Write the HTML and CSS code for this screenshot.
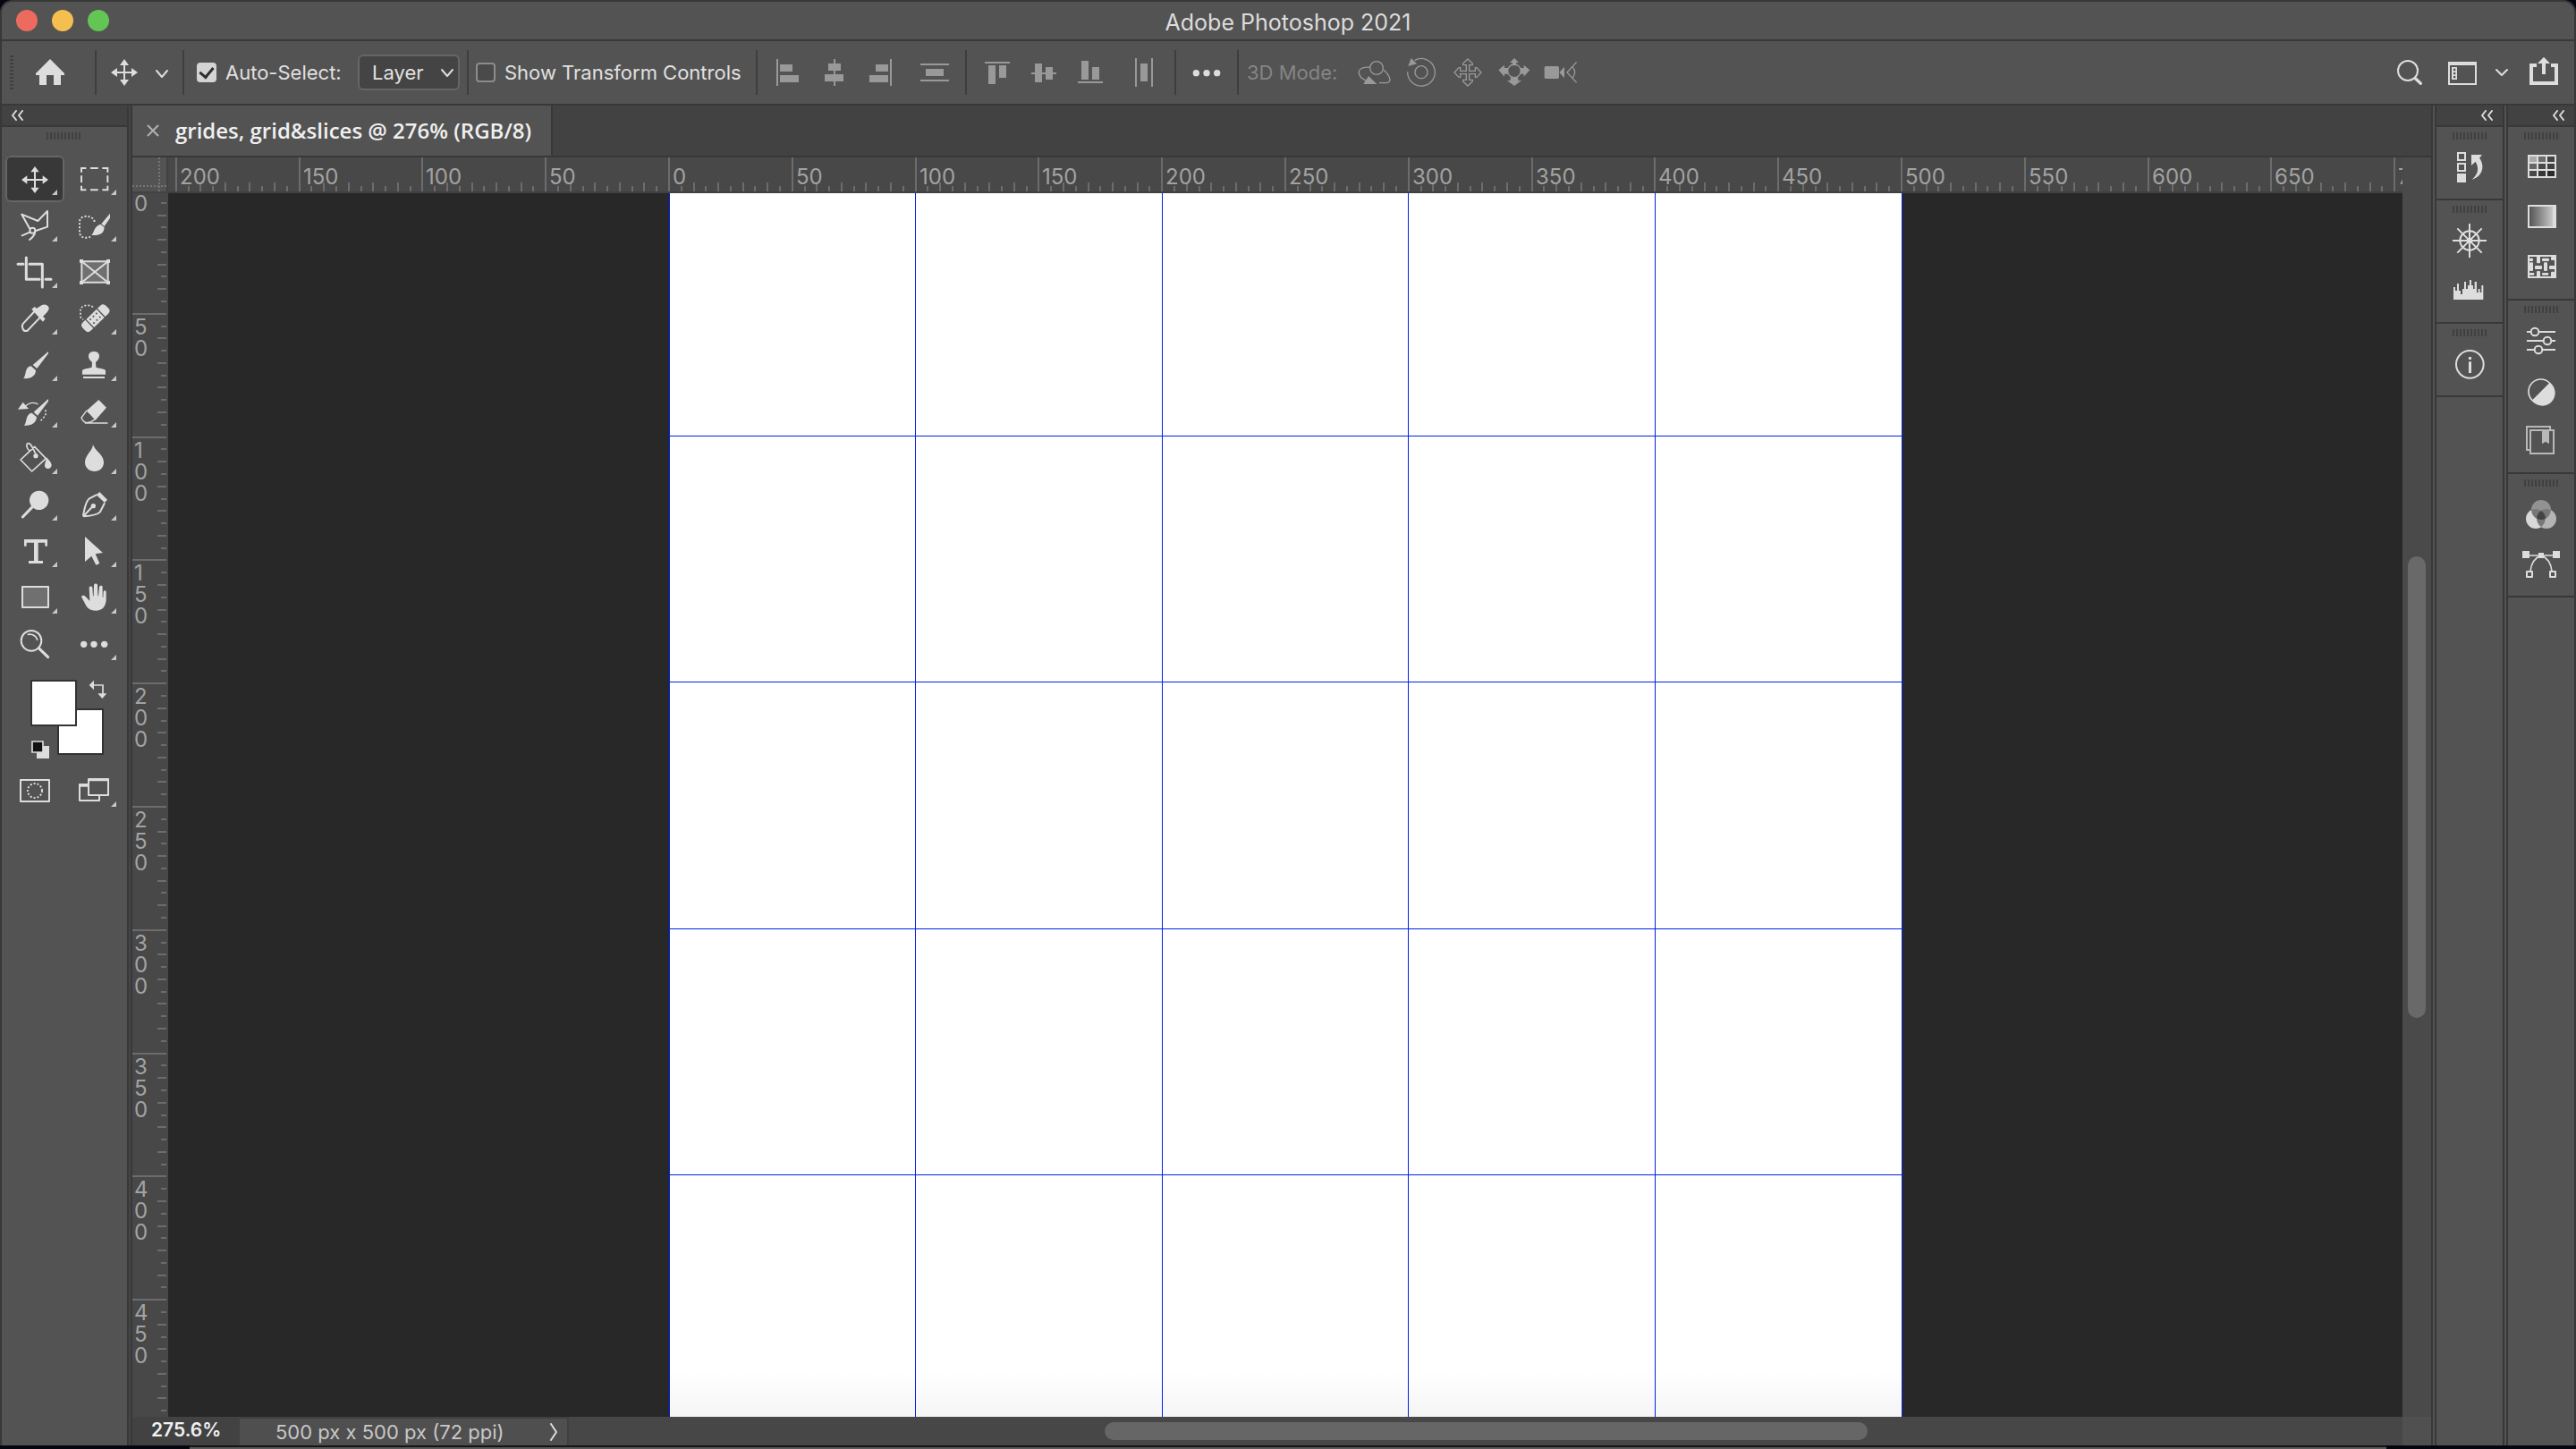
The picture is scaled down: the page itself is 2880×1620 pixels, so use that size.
FILE: index.html
```html
<!DOCTYPE html>
<html lang="en">
<head>
<meta charset="utf-8">
<title>Adobe Photoshop 2021</title>
<link rel="stylesheet" href="styles.css">
</head>
<body>
<div class="window">
  <header class="titlebar">
    <div class="lights">
      <button class="light red" aria-label="Close"></button>
      <button class="light yellow" aria-label="Minimize"></button>
      <button class="light green" aria-label="Zoom"></button>
    </div>
    <h1 class="app-title">Adobe Photoshop 2021</h1>
  </header>

  <div class="options">
    <span class="drag"></span>
    <button class="opt" aria-label="Home"><svg width="84" height="54" viewBox="22 54 84 54"><path class="f" d="M56 66 72 82v2h-4v11h-8V84h-8v11h-8V84h-4v-2z"/></svg></button>
    <span class="sep"></span>
    <button class="opt" aria-label="Move tool presets"><svg width="96" height="54" viewBox="108 54 96 54"><path class="s2" d="M139 70v22M128 81h22"/><path class="f" d="m139 66 5 7h-10zM139 96l5-7h-10zM124 81l7-5v10zM154 81l-7-5v10z"/><path class="s2" d="m175 79 6 7 6-7"/></svg></button>
    <span class="sep"></span>
    <label class="check auto"><input type="checkbox" checked>Auto-Select:</label>
    <span class="picker">
      <select aria-label="Auto-select target"><option>Layer</option><option>Group</option></select>
      <svg class="picker-arrow" width="16" height="12" viewBox="0 0 16 12"><path class="s2" d="m2 2 6 7 6-7"/></svg>
    </span>
    <span class="sep"></span>
    <label class="check transform"><input type="checkbox">Show Transform Controls</label>
    <span class="sep"></span>
    <button class="opt dim" aria-label="Align left edges"><svg width="60" height="54" viewBox="-39 0 180 162"><path d="M24 36h6v90h-6zM36 54h42v24H36zM36 90h63v24H36z"/></svg></button>
    <button class="opt dim" aria-label="Align horizontal centers"><svg width="52" height="54" viewBox="141 0 156 162"><path d="M216 36h6v90h-6zM198 51h42v24h-42zM186 87h63v24h-63z"/></svg></button>
    <button class="opt dim" aria-label="Align right edges"><svg width="54" height="54" viewBox="297 0 162 162"><path d="M405 36h6v90h-6zM357 54h42v24h-42zM336 90h63v24h-63z"/></svg></button>
    <button class="opt dim" aria-label="Distribute vertically"><svg width="66" height="54" viewBox="459 0 198 162"><path d="M507 51h96v6h-96zM525 69h60v24h-60zM507 105h96v6h-96z"/></svg></button>
    <span class="sep"></span>
    <button class="opt dim" aria-label="Align top edges"><svg width="60" height="54" viewBox="663 0 180 162"><path d="M723 45h84v6h-84zM735 57h24v63h-24zM771 57h24v42h-24z"/></svg></button>
    <button class="opt dim" aria-label="Align vertical centers"><svg width="52" height="54" viewBox="843 0 156 162"><path d="M879 81h84v6h-84zM891 51h24v63h-24zM927 63h24v42h-24z"/></svg></button>
    <button class="opt dim" aria-label="Align bottom edges"><svg width="56" height="54" viewBox="999 0 168 162"><path d="M1035 111h84v6h-84zM1047 42h24v63h-24zM1083 63h24v42h-24z"/></svg></button>
    <button class="opt dim" aria-label="Distribute horizontally"><svg width="64" height="54" viewBox="1167 0 192 162"><path d="M1227 33h6v96h-6zM1245 51h24v60h-24zM1281 33h6v96h-6z"/></svg></button>
    <span class="sep"></span>
    <button class="opt" aria-label="More options"><svg width="68" height="54" viewBox="-45 0 204 162"><g class="f"><circle cx="22" cy="83" r="11"/><circle cx="57" cy="83" r="11"/><circle cx="92" cy="83" r="11"/></g></svg></button>
    <span class="sep"></span>
    <span class="mode">3D Mode:</span>
    <button class="opt dim" aria-label="Orbit"><svg width="60" height="54" viewBox="525 0 180 162"><g class="l"><circle cx="627" cy="66" r="22"/><path d="M605 64c-30-3-48 10-30 34l18 12M650 72c24 20 30 44 8 44h-22"/></g><path d="M583 120l17-27 28 27z"/></svg></button>
    <button class="opt dim" aria-label="Roll"><svg width="50" height="54" viewBox="705 0 150 162"><g class="l"><circle cx="777" cy="80" r="21"/><path d="M731 79a46 46 0 1 0 24-39"/></g><path d="m733 60 10-27 19 19z"/></svg></button>
    <button class="opt dim" aria-label="Pan"><svg width="52" height="54" viewBox="855 0 156 162"><path class="l" d="m933 36 16 15v5h-11v20h20V65h5l15 16-15 16h-5V86h-20v20h11v5l-16 15-16-15v-5h11V86h-20v11h-5l-15-16 15-16h5v11h20V56h-11v-5z"/></svg></button>
    <button class="opt dim" aria-label="Slide"><svg width="50" height="54" viewBox="1011 0 150 162"><circle class="l" cx="1089" cy="76" r="22"/><path d="m1089 33 15 15h-9v10h-12V48h-9zM1089 126l24-18h-11v-11h-26v11h-11zM1036 73l20-17v10h12v20h-12v9zM1141 73l-20-17v10h-12v20h12v9z"/></svg></button>
    <button class="opt dim" aria-label="Zoom 3D camera"><svg width="56" height="54" viewBox="1161 0 168 162"><rect x="1190" y="60" width="49" height="42" rx="5"/><path d="m1240 81 17-19v38z"/><path class="l" d="m1298 46-32 35 32 34M1284 62q16 18 0 38"/></svg></button>
    <span class="grow"></span>
    <button class="opt" aria-label="Search"><svg width="60" height="54" viewBox="72 162 180 162"><circle class="s6" cx="156" cy="237" r="33"/><path class="s6 thick" d="m182 264 17 16"/></svg></button>
    <button class="opt" aria-label="Choose a workspace"><svg width="92" height="54" viewBox="252 162 276 162"><path class="f" fill-rule="evenodd" d="M291 207h96v78h-96zm6 12v60h84v-60zM303 225h18v42h-18zm6 5v8h7v-8zm0 13v7h7v-7zm0 12v7h7v-7z"/><path class="s6" d="m453 234 18 18 18-18"/></svg></button>
    <button class="opt" aria-label="Share"><svg width="62" height="54" viewBox="528 162 186 162"><path class="f" d="M564 213h24v12h-12v48h72v-48h-12v-12h24v72h-96zM612 191l21 22h-15v36h-12v-36h-15z"/></svg></button>
  </div>

  <div class="workspace">
    <aside class="tools">
      <div class="dock-head left"><button class="fold" aria-label="Collapse tools"><svg width="14" height="12" viewBox="0 0 14 12"><path class="s2" d="M6 1 2 6l4 5M13 1 9 6l4 5"/></svg></button></div>
      <div class="grip"></div>
      <div class="tool-grid">
        <button class="tool on" aria-label="Move"><svg viewBox="18 192 198 156"><path class="s6" d="M117 240v66M84 273h66"/><path class="f" d="m117 228 14 19h-28zM117 318l14-19h-28zM72 273l19-14v28zM162 273l-19-14v28z"/><path class="c" d="M192 306v18h-18z"/></svg></button>
        <button class="tool" aria-label="Marquee"><svg viewBox="216 192 198 156"><path class="s6 butt" d="M273 248v-14h16M303 234h26M343 234h18v14M361 259v23M361 293v14h-18M329 307h-26M289 307h-16v-14M273 282v-23"/><path class="c" d="M390 306v18h-18z"/></svg></button>
        <button class="tool" aria-label="Lasso"><svg viewBox="18 348 198 156"><path class="s6" d="M99 436 73 389l54 22 32-33v53l-39 13M100 449l-26 11M117 452q-5 14-18 22"/><circle class="s6" cx="109" cy="443" r="9"/><path class="c" d="M192 462v18h-18z"/></svg></button>
        <button class="tool" aria-label="Quick selection"><svg viewBox="216 348 198 156"><path class="s6 dots" d="M317 414c-4-24-50-26-50 0v34c0 22 26 22 36 16"/><path class="f" d="M369 386v15l-19 28-10-8zM337 422l13 11c-2 20-14 28-44 26 10-5 8-31 31-37z"/><path class="c" d="M390 462v18h-18z"/></svg></button>
        <button class="tool" aria-label="Crop"><svg viewBox="18 504 198 156"><path class="s9" d="M60 556h18M88 534v73h44M153 607h18M99 556h43v77"/><path class="c" d="M192 618v18h-18z"/></svg></button>
        <button class="tool" aria-label="Frame"><svg viewBox="216 504 198 156"><path class="s6 tint" d="M274 547h88v70h-88z"/><path class="s6" d="m274 547 88 70M362 547l-88 70"/><path class="f" d="M267 540h12v12h-12zM357 540h12v12h-12zM267 612h12v12h-12zM357 612h12v12h-12z"/></svg></button>
        <button class="tool" aria-label="Eyedropper"><svg viewBox="18 660 198 156"><path class="s6" d="m116 714-38 41c-7 8-2 25 8 25h5l42-44"/><path class="f" d="m106 707 10-8 7 5 18-11c8-4 22 0 23 10 1 5-3 10-6 14l-14 15 8 7-8 10z"/><path class="c" d="M192 774v18h-18z"/></svg></button>
        <button class="tool" aria-label="Healing brush"><svg viewBox="216 660 198 156"><path class="s5 dots" d="M312 700c-16-12-43-5-42 12v20q2 8 10 10"/><g transform="rotate(-44 319 737)"><path class="f" d="M279 719q-13 0-13 13v12q0 13 13 13h12v-38zM295 719h48v38h-48zM347 719v38h14q13 0 13-13v-12q0-13-13-13z"/><g class="hole"><circle cx="305" cy="729" r="3"/><circle cx="319" cy="729" r="3"/><circle cx="333" cy="729" r="3"/><circle cx="305" cy="746" r="3"/><circle cx="319" cy="746" r="3"/><circle cx="333" cy="746" r="3"/></g></g><path class="c" d="M390 774v18h-18z"/></svg></button>
        <button class="tool" aria-label="Brush"><svg viewBox="18 816 198 156"><path class="f" d="M162 849v7l-38 50-14-12zM104 898l16 14c0 18-16 30-42 27 11-5 3-38 26-41z"/><path class="c" d="M192 930v18h-18z"/></svg></button>
        <button class="tool" aria-label="Clone stamp"><svg viewBox="216 816 198 156"><path class="f" d="M309 885c-17-12-17-36 6-36s23 24 6 36l1 16c2 6 32 4 32 13v12h-78v-12c0-9 29-7 32-13zM279 933h72v6h-72z"/><path class="c" d="M390 930v18h-18z"/></svg></button>
        <button class="tool" aria-label="History brush"><svg viewBox="18 972 198 156"><path class="f" d="M162 1008v8l-36 48-13-12zM107 1055l16 14c-1 18-17 31-43 28 11-5 4-39 27-42zM60 1043l17-24 19 22z"/><path class="s4" d="M84 1034q18-20 42-9"/><path class="s5 dots" d="M153 1045v18l-20 22"/><path class="c" d="M192 1086v18h-18z"/></svg></button>
        <button class="tool" aria-label="Eraser"><svg viewBox="216 972 198 156"><path class="f" d="m290 1048 41-37 26 26-37 42z"/><path class="s4" d="m290 1048-17 23q3 11 16 17l16-3 15-10M286 1089h74"/><path class="c" d="M390 1086v18h-18z"/></svg></button>
        <button class="tool" aria-label="Paint bucket"><svg viewBox="18 18 198 156"><path class="s5" d="m69 102 47-44 38 40-47 43zM100 73c-12-9-13-24-6-26 8-3 14 11 25 34"/><circle class="f" cx="120" cy="89" r="8"/><path class="f" d="M156 94c9 10 17 18 17 26 0 7-5 12-12 12s-12-5-11-12c0-7 5-13 6-26z"/><path class="c" d="M192 132v18h-18z"/></svg></button>
        <button class="tool" aria-label="Blur"><svg viewBox="216 18 198 156"><path class="f" d="M312 51c7 22 36 34 36 60 0 18-14 30-31 30s-32-12-32-30c0-25 25-38 27-60z"/><path class="c" d="M390 132v18h-18z"/></svg></button>
        <button class="tool" aria-label="Dodge"><svg viewBox="18 174 198 156"><circle class="f" cx="131" cy="238" r="32"/><path class="s9" d="m109 260-33 34"/><path class="c" d="M192 288v18h-18z"/></svg></button>
        <button class="tool" aria-label="Pen"><svg viewBox="216 174 198 156"><path class="s6" d="m323 220-23 12c-15 12-17 39-21 57l3 3c22-2 43-4 53-14l15-29M283 288l28-30"/><circle class="f" cx="313" cy="257" r="8"/><path class="f" d="m334 210 26 26-9 10-28-26z"/><path class="c" d="M390 288v18h-18z"/></svg></button>
        <button class="tool" aria-label="Type"><svg viewBox="18 330 198 156"><path class="f" d="M81 369h78v22q-5 4-8 0v-11h-23v61h16v9H96v-9h18v-61H89v11q-4 4-8 0z"/><path class="c" d="M192 444v18h-18z"/></svg></button>
        <button class="tool" aria-label="Path selection"><svg viewBox="216 330 198 156"><path class="f" d="M285 360v84l22-19 15 30 12-5-14-32 25-4z"/><path class="c" d="M390 444v18h-18z"/></svg></button>
        <button class="tool" aria-label="Rectangle"><svg viewBox="18 486 198 156"><path class="s6 tint" d="M75 528h87v69H75z"/><path class="c" d="M192 600v18h-18z"/></svg></button>
        <button class="tool" aria-label="Hand"><svg viewBox="216 486 198 156"><path class="f" d="M273 562c3-7 11-5 15 0l13 14-2-45c1-6 10-6 11 0l2 28h2l1-37c1-6 11-6 12 0l1 37h2l3-30c1-6 11-6 11 0v34l2 1 1-19c2-6 9-5 9 1v28c-2 22-14 34-34 34-23 0-32-13-37-24z"/><path class="c" d="M390 600v18h-18z"/></svg></button>
        <button class="tool" aria-label="Zoom"><svg viewBox="18 642 198 156"><circle class="s6" cx="105" cy="709" r="34"/><path class="s5" d="M94 688q24-3 31 18"/><path class="s9" d="m130 734 31 30"/></svg></button>
        <button class="tool" aria-label="Edit toolbar"><svg viewBox="216 642 198 156"><g class="f"><circle cx="281" cy="721" r="11"/><circle cx="315" cy="721" r="11"/><circle cx="350" cy="721" r="11"/></g><path class="c" d="M390 756v18h-18z"/></svg></button>
      </div>
      <div class="swatches">
        <button class="swatch back" aria-label="Background color"></button>
        <button class="swatch fore" aria-label="Foreground color"></button>
        <button class="mini swap" aria-label="Swap colors"><svg width="22" height="22" viewBox="296 840 66 66"><path class="s5 butt" d="M310 858h34v30"/><path class="f" d="m298 858 16-16v32zM327 886h30l-15 17z"/></svg></button>
        <button class="mini reset" aria-label="Default colors"><svg width="22" height="22" viewBox="102 1041 66 66"><path class="f" d="M123 1062h42v42h-42z"/><path fill="#111" stroke="#ddd" stroke-width="5" d="M108 1047h36v36h-36z"/></svg></button>
      </div>
      <div class="tool-grid">
        <button class="tool" aria-label="Quick mask"><svg viewBox="18 1134 198 156"><path class="s6" d="M69 1176h96v72H69z"/><circle class="s6 dots" cx="117" cy="1212" r="24"/></svg></button>
        <button class="tool" aria-label="Screen mode"><svg viewBox="216 1134 198 156"><path class="s6" d="M297 1173h66v54h-66zM297 1191h-30v54h66v-14"/><path class="f" d="M297 1170h68v10h-68zM265 1189h32v10h-32z"/><path class="c" d="M390 1248v18h-18z"/></svg></button>
      </div>
    </aside>

    <main class="document">
      <div class="tabs">
        <div class="tab">
          <button class="tab-close" aria-label="Close document"><svg width="14" height="14" viewBox="0 0 14 14"><path d="m1 1 12 12M13 1 1 13"/></svg></button>
          <span>grides, grid&amp;slices @ 276% (RGB/8)</span>
        </div>
      </div>
      <div class="view">
        <div class="corner"><svg width="38" height="38"><path d="M30 0v38M0 32h38"/></svg></div>
        <div class="ruler across"><svg id="ruler-x"></svg></div>
        <div class="ruler down"><svg id="ruler-y"></svg></div>
        <div class="stage">
          <div class="artboard" id="artboard"></div>
        </div>
        <div class="track-y"><div class="thumb-y"></div></div>
      </div>
      <footer class="status">
        <span class="zoom-level">275.6%</span>
        <button class="doc-info"><span>500 px x 500 px (72 ppi)</span><svg width="10" height="20" viewBox="0 0 10 20"><path class="s2" d="m2 1 6 9-6 9"/></svg></button>
        <div class="track-x"><div class="thumb-x"></div></div>
        <span class="track-corner"></span>
      </footer>
    </main>

    <aside class="dock">
      <div class="dock-head"><button class="fold" aria-label="Expand panels"><svg width="14" height="12" viewBox="0 0 14 12"><path class="s2" d="M6 1 2 6l4 5M13 1 9 6l4 5"/></svg></button></div>
      <section class="group"><div class="grip"></div>
        <button class="panel" aria-label="History"><svg viewBox="252 474 222 168"><path class="s6 butt" d="M324 513h24v24h-24zM324 549h24v24h-24z"/><path class="f" d="M321 582h30v30h-30zM369 519h36l-9 11c19 24 12 62-25 72 21-19 25-37 12-60l-14 13z"/></svg></button>
      </section>
      <section class="group"><div class="grip"></div>
        <button class="panel" aria-label="Navigator"><svg viewBox="252 720 222 168"><circle class="s6" cx="363" cy="807" r="32"/><circle class="f" cx="363" cy="807" r="10"/><path class="s6 butt" d="M363 750v114M306 807h114M322 766l82 82M404 766l-82 82"/></svg></button>
        <button class="panel" aria-label="Histogram"><svg viewBox="252 888 222 168"><path class="f" d="M309 1005v-42h6v12h6v-24h6v24h6v12h6v-18h6v-24h6v24h6v-12h6v-18h6v18h6v12h5v-24h7v36h5v-12h6v12h5v-24h6v48z"/></svg></button>
      </section>
      <section class="group"><div class="grip"></div>
        <button class="panel" aria-label="Info"><svg viewBox="252 1134 222 168"><circle class="s6" cx="364" cy="1222" r="46"/><path class="f" d="M360 1213h9v38h-9zM360 1197h9v9h-9z"/></svg></button>
      </section>
    </aside>
    <aside class="dock last">
      <div class="dock-head"><button class="fold" aria-label="Expand panels"><svg width="14" height="12" viewBox="0 0 14 12"><path class="s2" d="M6 1 2 6l4 5M13 1 9 6l4 5"/></svg></button></div>
      <section class="group"><div class="grip"></div>
        <button class="panel" aria-label="Swatches"><svg viewBox="492 474 222 168"><path class="f" d="M558 519h96v78h-96z"/><path fill="#aaa" d="M564 525h24v18h-24z"/><path fill="#6d6d6d" d="M594 525h24v18h-24z"/><path fill="#444" d="M624 525h24v18h-24z"/><path fill="#666" d="M564 549h24v18h-24z"/><path fill="#484848" d="M594 549h24v18h-24z"/><path fill="#404040" d="M624 549h24v18h-24z"/><path fill="#484848" d="M564 573h24v18h-24z"/><path fill="#363636" d="M594 573h24v18h-24z"/><path fill="#2a2a2a" d="M624 573h24v18h-24z"/></svg></button>
        <button class="panel" aria-label="Gradients"><svg viewBox="492 642 222 168"><defs><linearGradient id="ramp"><stop offset="0" stop-color="#555"/><stop offset="1" stop-color="#c8c8c8"/></linearGradient></defs><path class="f" d="M558 687h96v78h-96z"/><path fill="url(#ramp)" d="M564 693h78v66h-78z"/></svg></button>
        <button class="panel" aria-label="Patterns"><svg viewBox="492 810 222 168"><path class="f" d="M558 855h96v78h-96z"/><path class="hole" d="M564 861h84v66h-84z"/><g class="f"><rect x="588" y="855" width="12" height="28" rx="3"/><rect x="636" y="861" width="18" height="12" rx="3"/><rect x="606" y="866" width="24" height="10" rx="3"/><rect x="558" y="866" width="18" height="10" rx="3"/><rect x="564" y="880" width="12" height="29" rx="3"/><rect x="582" y="891" width="24" height="12" rx="3"/><rect x="612" y="880" width="12" height="29" rx="3"/><rect x="630" y="891" width="24" height="12" rx="3"/><rect x="588" y="909" width="12" height="24" rx="3"/><rect x="558" y="915" width="22" height="8" rx="3"/><rect x="606" y="915" width="22" height="8" rx="3"/><rect x="636" y="911" width="12" height="22" rx="3"/></g></svg></button>
      </section>
      <section class="group"><div class="grip"></div>
        <button class="panel" aria-label="Properties"><svg viewBox="492 1056 222 168"><path class="s6 butt" d="M555 1113h13M596 1113h55M555 1143h55M638 1143h13M555 1173h25M608 1173h43"/><g class="s6"><circle cx="582" cy="1113" r="13"/><circle cx="624" cy="1143" r="13"/><circle cx="594" cy="1173" r="13"/></g></svg></button>
        <button class="panel" aria-label="Adjustments"><svg viewBox="492 1224 222 168"><circle class="s5" cx="602" cy="1313" r="41"/><path class="f" d="m632 1283-60 60a43 43 0 1 0 60-60z"/></svg></button>
        <button class="panel" aria-label="Libraries"><svg viewBox="492 132 222 168"><path fill="none" stroke="#b8b8b8" stroke-width="6" d="M567 183h78v78h-78zM567 249h-12v-78h78v12"/><path fill="#b8b8b8" d="M606 183h24v46l-12-8-12 8z"/></svg></button>
      </section>
      <section class="group"><div class="grip"></div>
        <button class="panel" aria-label="Channels"><svg viewBox="492 378 222 168"><circle fill="#d8d8d8" cx="585" cy="480" r="33"/><circle fill="#b4b4b4" cx="621" cy="480" r="33"/><circle fill="#929292" cx="603" cy="450" r="33"/><path fill="#777" d="M571 450a33 33 0 0 1 32 3 33 33 0 0 1 32-3 33 33 0 0 1-32 33 33 33 0 0 1-32-33zM603 453a33 33 0 0 1 0 54 33 33 0 0 1 0-54z"/><path fill="#444" d="M603 453q14 10 15 26-15 8-30 0 1-16 15-26z"/></svg></button>
        <button class="panel" aria-label="Paths"><svg viewBox="492 546 222 168"><path class="s5" d="M564 603h78M567 656q4-40 34-52M639 656q-4-40-34-52"/><path class="f" d="M540 588h24v24h-24zM642 588h24v24h-24zM594 594h18v18h-18z"/><path class="s6" d="M555 657h18v18h-18zM633 657h18v18h-18z"/></svg></button>
      </section>
    </aside>
  </div>
</div>
<div class="backdrop"></div>
<script src="app.js"></script>
</body>
</html>
```
FILE: styles.css
```css
* { box-sizing: border-box; }
body {
  margin: 0;
  height: 100vh;
  display: flex;
  flex-direction: column;
  overflow: hidden;
  background: #05070f;
  color: #e0e0e0;
  font: 22px/28px Inter, "Liberation Sans", sans-serif;
}
button { padding: 0; border: 0; background: none; color: inherit; font: inherit; display: block; }
svg { display: block; }

.f { fill: #ddd; }
.s2, .s4, .s5, .s6, .s9 { fill: none; stroke: #ddd; stroke-linecap: round; stroke-linejoin: round; }
.s2 { stroke-width: 2; }
.s4 { stroke-width: 4; }
.s5 { stroke-width: 5; }
.s6 { stroke-width: 6; }
.s9 { stroke-width: 9; }
.tint { fill: #707070; }
.thick { stroke-width: 10; }
.butt { stroke-linecap: butt; stroke-linejoin: miter; }
.dots { stroke-linecap: butt; stroke-dasharray: 6 6; }
.hole { fill: #535353; }
.c { fill: #c8c8c8; }
.dim { fill: #999; }
.l { fill: none; stroke: #999; stroke-width: 4; }

.window {
  flex: 1;
  min-height: 0;
  display: flex;
  flex-direction: column;
  border: 2px solid #383838;
  border-bottom: 0;
  border-radius: 14px 14px 0 0;
  background: #535353;
  overflow: hidden;
}
.backdrop { height: 4px; margin: 0 212px; border-top: 2px solid #141414; background: #5a5a5a; }

.titlebar {
  flex: none;
  height: 44px;
  display: grid;
  grid-template-columns: 1fr auto 1fr;
  align-items: center;
  border-bottom: 2px solid #383838;
}
.lights { display: flex; gap: 16px; padding-left: 16px; }
.light { width: 24px; height: 24px; border-radius: 50%; }
.red { background: #ed6a5e; }
.yellow { background: #f5bf4f; }
.green { background: #62c554; }
.app-title { margin: 0; padding-top: 4px; font-size: 25px; font-weight: 400; color: #dcdcdc; }

.options {
  flex: none;
  height: 72px;
  display: flex;
  align-items: center;
  border-bottom: 2px solid #383838;
}
.drag { width: 20px; height: 38px; border-left: 9px solid transparent; border-right: 7px solid transparent; background: repeating-linear-gradient(#3f3f3f 0 2px, transparent 2px 4px) padding-box; }
.sep { flex: none; width: 2px; height: 50px; background: #3e3e3e; }
.opt { flex: none; }
.check { flex: none; display: flex; align-items: center; gap: 10px; white-space: nowrap; }
.auto { width: 194px; padding-left: 14px; }
.transform { width: 321px; padding-left: 8px; }
.check input {
  flex: none;
  appearance: none;
  width: 22px;
  height: 22px;
  margin: 0;
  border: 2px solid #8c8c8c;
  border-radius: 4px;
  background: #4a4a4a;
}
.check input:checked { border-color: #d4d4d4; background: #d4d4d4; display: grid; place-items: center; }
.check input:checked::after { content: ""; width: 7px; height: 12px; margin-bottom: 3px; border: solid #303030; border-width: 0 3px 3px 0; transform: rotate(40deg); }
.picker { flex: none; position: relative; width: 114px; margin-right: 8px; }
.picker select {
  appearance: none;
  display: block;
  width: 100%;
  height: 40px;
  padding: 0 14px;
  border: 2px solid #666;
  border-radius: 6px;
  background: #444;
  color: inherit;
  font: inherit;
}
.picker-arrow { position: absolute; right: 6px; top: 15px; pointer-events: none; }
.mode { width: 120px; padding-left: 9px; color: #858585; white-space: nowrap; }
.grow { flex: 1; }

.workspace { flex: 1; min-height: 0; display: flex; }
.tools { flex: none; width: 146px; border-right: 2px solid #383838; box-shadow: inset -2px 0 #464646, inset -4px 0 #383838; }
.tools .dock-head, .dock .dock-head { height: 24px; }
.dock-head { display: flex; align-items: center; justify-content: flex-end; padding-right: 11px; border-bottom: 2px solid #383838; background: #424242; }
.tools .dock-head { margin-right: 4px; justify-content: flex-start; padding-left: 10px; }
.grip { height: 16px; padding: 6px 0 2px; width: 38px; margin: 0 auto; background: repeating-linear-gradient(90deg, #404040 0 2px, transparent 2px 4px) content-box; }
.tools .grip { height: 32px; padding-bottom: 18px; margin-left: 50px; }
.tool-grid { display: grid; grid-template-columns: 66px 66px; padding-left: 4px; }
.tool { position: relative; height: 52px; }
.tool svg { width: 66px; height: 52px; }
.tool.on { border-radius: 6px; background: #383838; box-shadow: inset 0 0 0 2px #666; }
.swatches { position: relative; height: 112px; }
.swatch { position: absolute; width: 52px; height: 52px; border: 2px solid #333; background: #fff; }
.fore { left: 32px; top: 14px; }
.back { left: 62px; top: 46px; }
.mini { position: absolute; }
.swap { left: 97px; top: 14px; }
.reset { left: 32px; top: 81px; }

.document { flex: 1; min-width: 0; display: flex; flex-direction: column; background: #424242; border-right: 2px solid #383838; }
.tabs { flex: none; height: 58px; display: flex; border-bottom: 2px solid #383838; }
.tab { display: flex; align-items: center; gap: 18px; width: 470px; padding-left: 16px; border-right: 2px solid #383838; background: #535353; color: #f0f0f0; font: 600 24px/32px "Open Sans", "Noto Sans", sans-serif; white-space: nowrap; }
.tab-close svg { fill: none; stroke: #b0b0b0; stroke-width: 2; }
.view { flex: 1; min-height: 0; display: grid; grid-template: 40px minmax(0, 1fr) / 40px minmax(0, 1fr) 32px; background: #4a4a4a; }
.corner { background: #535353; border: solid #424242; border-width: 0 2px 2px 0; }
.corner path { stroke: #757575; stroke-width: 2; stroke-dasharray: 2 2; }
.ruler { overflow: hidden; background: #484848; }
.ruler svg { width: 100%; height: 100%; fill: #a2a2a2; font-size: 24px; }
.ruler rect { fill: #6c6c6c; }
.across { border-bottom: 2px solid #404040; }
.down { grid-row: 2; }
.stage { grid-row: 2; grid-column: 2; display: flex; justify-content: center; align-items: flex-start; overflow: hidden; background: #282828; }
.artboard {
  flex: none;
  display: grid;
  grid-template: repeat(5, 1fr) / repeat(5, 1fr);
  width: 1379px;
  height: 1376px;
  margin-top: -4px;
  border-right: 1px solid #0022e6;
  background: linear-gradient(#fff 96%, #f4f4f4);
}
.cell { border: solid #0022e6; border-width: 1px 0 0 1px; }
.track-y { grid-row: 1 / 3; grid-column: 3; display: flex; flex-direction: column; padding: 40px 6px 0; }
.track-y::before { content: ""; flex: 406; }
.track-y::after { content: ""; flex: 446; }
.thumb-y { flex: 516; border-radius: 10px; background: #696969; }

.status { flex: none; height: 32px; display: flex; background: #474747; line-height: 30px; }
.zoom-level { width: 120px; padding-left: 21px; background: #424242; color: #f0f0f0; font-size: 21px; font-weight: 600; }
.doc-info { display: flex; align-items: center; justify-content: space-between; width: 368px; padding: 0 10px 0 40px; border: solid #404040; border-width: 2px 2px 0 0; background: #4f4f4f; color: #c8c8c8; white-space: nowrap; }
.track-x { flex: 1; display: flex; padding: 6px 0; }
.track-x::before { content: ""; flex: 599; }
.track-x::after { content: ""; flex: 598; }
.thumb-x { flex: 853; height: 20px; border-radius: 10px; background: #666; }
.track-corner { width: 32px; background: #505050; }

.dock { flex: none; width: 78px; border: solid #383838; border-width: 0 2px; margin-left: 2px; }
.dock.last { width: 76px; border-right: 0; }
.group { border-bottom: 2px solid #383838; padding-bottom: 8px; }
.panel svg { width: 74px; height: 56px; }
```
FILE: app.js
```js
const SVG = "http://www.w3.org/2000/svg";
const UNITS = 500;
const SCALE = 2.756;

function rect(svg, x, y, width, height) {
  const node = document.createElementNS(SVG, "rect");
  Object.entries({ x, y, width, height }).forEach(([k, v]) => node.setAttribute(k, v));
  svg.append(node);
}

function label(svg, x, y, value) {
  const node = document.createElementNS(SVG, "text");
  node.setAttribute("x", x);
  node.setAttribute("y", y);
  node.textContent = value;
  svg.append(node);
}

// Ticks every 5 units, longer every 10, full length with a label every 50.
function drawRuler(svg, origin, length, vertical) {
  svg.replaceChildren();
  const first = Math.ceil(-origin / SCALE / 5) * 5;
  for (let u = first; origin + u * SCALE < length; u += 5) {
    const at = Math.round(origin + u * SCALE);
    const size = u % 50 === 0 ? 38 : u % 10 === 0 ? 10 : 6;
    if (vertical) rect(svg, 38 - size, at, size, 2);
    else rect(svg, at, 38 - size, 2, size);
  }
  for (let u = Math.floor(first / 50) * 50; origin + u * SCALE < length; u += 50) {
    const at = Math.round(origin + u * SCALE);
    const text = String(Math.abs(u));
    if (!vertical) label(svg, at + 5, 30, text);
    else if (u >= 0) [...text].forEach((digit, i) => label(svg, 2, at + 24 + i * 24, digit));
  }
}

function layout() {
  const across = document.getElementById("ruler-x");
  const down = document.getElementById("ruler-y");
  const width = across.clientWidth;
  drawRuler(across, (width - UNITS * SCALE) / 2 - 1, width, false);
  drawRuler(down, -4, down.clientHeight, true);
}

const artboard = document.getElementById("artboard");
for (let i = 0; i < 25; i++) {
  const cell = document.createElement("div");
  cell.className = "cell";
  artboard.append(cell);
}
layout();
window.addEventListener("resize", layout);
```
